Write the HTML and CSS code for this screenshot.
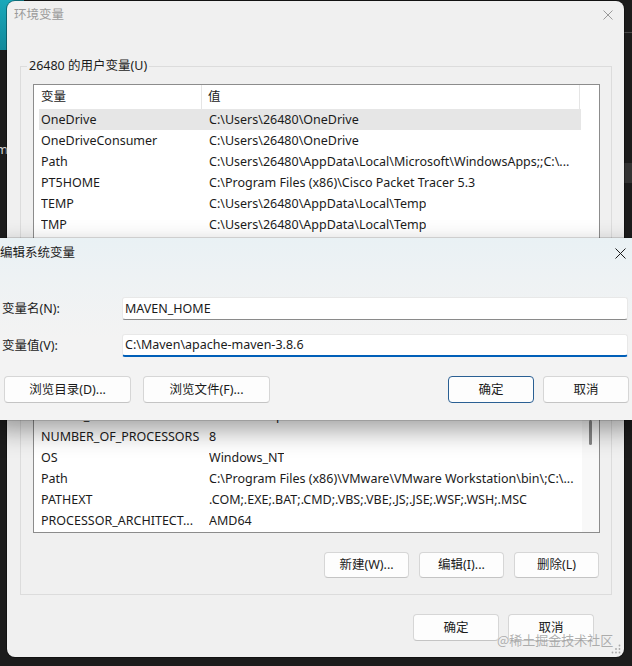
FILE: index.html
```html
<!DOCTYPE html>
<html lang="zh-CN">
<head>
<meta charset="utf-8">
<title>环境变量</title>
<link rel="stylesheet" href="styles.css">
</head>
<body>
<div class="teal"></div>
<div class="band band-a"></div>
<div class="band band-b"></div>
<span class="edge-m">m</span>

<section class="win back">
  <header class="titlebar">
    <span class="title">环境变量</span>
    <svg class="close" width="10" height="10" viewBox="0 0 10 10"><path d="M0.5 0.5L9.5 9.5M9.5 0.5L0.5 9.5" stroke="#9a9a9a" stroke-width="1" fill="none"/></svg>
  </header>

  <fieldset class="group g1">
    <legend>26480 的用户变量(U)</legend>
    <div class="list l1">
      <div class="lcol">
        <div class="lhead"><span class="c1">变量</span><span class="c2">值</span></div>
        <div class="row hover"><span class="c1">OneDrive</span><span class="c2">C:\Users\26480\OneDrive</span></div>
        <div class="row"><span class="c1">OneDriveConsumer</span><span class="c2">C:\Users\26480\OneDrive</span></div>
        <div class="row"><span class="c1">Path</span><span class="c2">C:\Users\26480\AppData\Local\Microsoft\WindowsApps;;C:\...</span></div>
        <div class="row"><span class="c1">PT5HOME</span><span class="c2">C:\Program Files (x86)\Cisco Packet Tracer 5.3</span></div>
        <div class="row"><span class="c1">TEMP</span><span class="c2">C:\Users\26480\AppData\Local\Temp</span></div>
        <div class="row"><span class="c1">TMP</span><span class="c2">C:\Users\26480\AppData\Local\Temp</span></div>
      </div>
      <div class="sb"></div>
    </div>
    <div class="btns hidden-row">
      <span class="btn"></span><span class="btn"></span><span class="btn"></span>
    </div>
  </fieldset>

  <fieldset class="group g2">
    <legend class="covered"></legend>
    <div class="list l2">
      <div class="lcol">
        <div class="lhead"><span class="c1"></span><span class="c2"></span></div>
        <div class="row"></div>
        <div class="row"></div>
        <div class="row"><span class="c1">MAVEN_HOME</span><span class="c2">C:\Maven\apache-maven-3.8.6</span></div>
        <div class="row"><span class="c1">NUMBER_OF_PROCESSORS</span><span class="c2">8</span></div>
        <div class="row"><span class="c1">OS</span><span class="c2">Windows_NT</span></div>
        <div class="row"><span class="c1">Path</span><span class="c2">C:\Program Files (x86)\VMware\VMware Workstation\bin\;C:\...</span></div>
        <div class="row"><span class="c1">PATHEXT</span><span class="c2">.COM;.EXE;.BAT;.CMD;.VBS;.VBE;.JS;.JSE;.WSF;.WSH;.MSC</span></div>
        <div class="row"><span class="c1">PROCESSOR_ARCHITECT...</span><span class="c2">AMD64</span></div>
      </div>
      <div class="sb on"><span class="thumb"></span></div>
    </div>
    <div class="btns">
      <span class="btn">新建(W)...</span><span class="btn">编辑(I)...</span><span class="btn">删除(L)</span>
    </div>
  </fieldset>

  <div class="footer">
    <span class="btn big">确定</span><span class="btn big">取消</span>
  </div>
  <svg class="grip" width="10" height="10" viewBox="0 0 10 10">
    <g fill="#a8a8a8"><circle cx="8.5" cy="1.5" r="0.9"/><circle cx="8.5" cy="5" r="0.9"/><circle cx="5" cy="5" r="0.9"/><circle cx="8.5" cy="8.5" r="0.9"/><circle cx="5" cy="8.5" r="0.9"/><circle cx="1.5" cy="8.5" r="0.9"/></g>
  </svg>
</section>

<section class="win front">
  <header class="titlebar">
    <span class="title">编辑系统变量</span>
    <span class="closebox"><svg width="11" height="11" viewBox="0 0 11 11"><path d="M0.5 0.5L10.5 10.5M10.5 0.5L0.5 10.5" stroke="#1b1b1b" stroke-width="1" fill="none"/></svg></span>
  </header>
  <div class="form">
    <label class="lbl">变量名(N):</label>
    <div class="field">MAVEN_HOME</div>
    <label class="lbl">变量值(V):</label>
    <div class="field focus">C:\Maven\apache-maven-3.8.6</div>
  </div>
  <div class="dbtns">
    <div class="bgroup wide">
      <span class="btn dbtn">浏览目录(D)...</span><span class="btn dbtn">浏览文件(F)...</span>
    </div>
    <div class="bgroup">
      <span class="btn big primary">确定</span><span class="btn big">取消</span>
    </div>
  </div>
</section>

<div class="watermark">@稀土掘金技术社区</div>
</body>
</html>
```

FILE: styles.css
```css
* { box-sizing: border-box; }
html, body { margin: 0; padding: 0; }
body {
  width: 632px;
  height: 666px;
  overflow: hidden;
  position: relative;
  background: #1c1c1c;
  font-family: "Noto Sans", "Noto Sans CJK SC", sans-serif;
  font-size: 12.5px;
  line-height: 16px;
  color: #1b1b1b;
}

/* desktop behind the windows */
.teal {
  position: absolute; left: 0; top: 0; width: 24px; height: 50px;
  background: linear-gradient(#1aa8ba, #12899b);
}
.band { position: absolute; right: 0; width: 10px; }
.band-a { top: 32px; height: 1px; background: #4a4a4a; }
.band-b { top: 163px; height: 20px; background: #333; }
.edge-m {
  position: absolute; left: -4px; top: 141px;
  color: #d0d0d0; font-size: 13px;
}

/* windows */
.win { position: absolute; display: flex; flex-direction: column; }
.back {
  left: 7px; top: 1px; width: 617px; height: 656px;
  background: #f0f0f0;
  border-radius: 8px;
  box-shadow: 0 0 0 1px rgba(0, 0, 0, .35);
}
.titlebar {
  display: flex; align-items: center; justify-content: space-between;
  flex: none;
}
.back .titlebar { height: 28px; padding-left: 7px; color: #9a9a9a; }
.back .close { margin-right: 11px; }

.group {
  margin: 29px 12px 0 13px;
  padding: 10px 11px 10px 12px;
  border: 1px solid #dcdcdc;
  min-width: 0;
}
.g2 { margin-top: 10px; padding-bottom: 16px; }
legend {
  padding: 0 2px;
  margin-left: -6px;
  line-height: 16px;
}
legend.covered { height: 16px; width: 80px; }

.list {
  display: flex;
  background: #fff;
  border: 1px solid #8c8c8c;
  overflow: hidden;
}
.l1 { height: 170px; }
.l2 { height: 195px; }
.lcol { flex: 1; min-width: 0; }
.sb { width: 17px; flex: none; }
.sb.on { background: #f8f8f8; }
.thumb {
  display: block; width: 3px; height: 25px;
  margin: 81px 0 0 7px;
  background: #868686; border-radius: 2px;
}

.lhead { display: flex; height: 24px; margin-right: 2px; }
.lhead .c1 {
  width: 168px; flex: none; padding-left: 7px;
  display: flex; align-items: center;
  border-right: 1px solid #e5e5e5;
}
.lhead .c2 {
  flex: 1; padding-left: 6px;
  display: flex; align-items: center;
  border-right: 1px solid #e5e5e5;
}
.row {
  display: flex; align-items: center;
  height: 21px;
  margin: 0 1px 0 5px;
  padding-left: 2px;
  white-space: nowrap;
}
.row .c1 { width: 168px; flex: none; overflow: hidden; }
.row .c2 { overflow: hidden; }
.row.hover { background: #e6e6e6; }

.btns {
  display: flex; justify-content: flex-end; gap: 10px;
  margin: 19px 1px 0 0;
}
.g1 .btns { margin-top: 10px; }
.btn {
  display: flex; align-items: center; justify-content: center;
  width: 85px; height: 26px;
  background: #fdfdfd;
  border: 1px solid #d6d6d6;
  border-bottom-color: #c4c4c4;
  border-radius: 4px;
  white-space: nowrap;
}
.btns.hidden-row .btn { height: 27px; }
.btn.big { width: 86px; height: 27px; }
.footer {
  display: flex; justify-content: flex-end; gap: 9px;
  margin: 19px 30px 0 0;
}
.grip { position: absolute; right: 3px; bottom: 3px; }

/* front dialog */
.front {
  left: -10px; top: 238px; width: 653px; height: 182px;
  background: linear-gradient(#e9f1f4 0, #eef2f4 40px, #f3f3f3 100px);
  border-radius: 8px;
  box-shadow: 0 10px 26px rgba(0, 0, 0, .38), 0 0 0 1px rgba(0, 0, 0, .12);
}
.front .titlebar { height: 30px; padding-left: 10px; }
.closebox {
  width: 46px; height: 30px;
  display: flex; align-items: center; justify-content: center;
}
.form {
  display: grid;
  grid-template-columns: 120px 1fr;
  row-gap: 14px;
  align-items: center;
  padding: 29px 15px 0 12px;
}
.field {
  height: 23px;
  display: flex; align-items: center;
  padding-left: 2px;
  background: #fff;
  border: 1px solid #e8e8e8;
  border-bottom: 1px solid #8a8a8a;
  border-radius: 3px;
}
.field.focus { border-bottom: 2px solid #005fb8; }
.dbtns {
  display: flex; justify-content: space-between;
  margin: 19px 14px 0 14px;
}
.bgroup { display: flex; gap: 9px; }
.bgroup.wide { gap: 12px; }
.dbtn { width: 127px; height: 27px; }
.primary { border: 1px solid #2a5f93; }

.watermark {
  position: absolute; left: 497px; top: 631px;
  font-family: "Noto Sans CJK SC", sans-serif;
  font-size: 13px; line-height: 18px;
  color: rgba(150, 150, 150, .75);
}
```
